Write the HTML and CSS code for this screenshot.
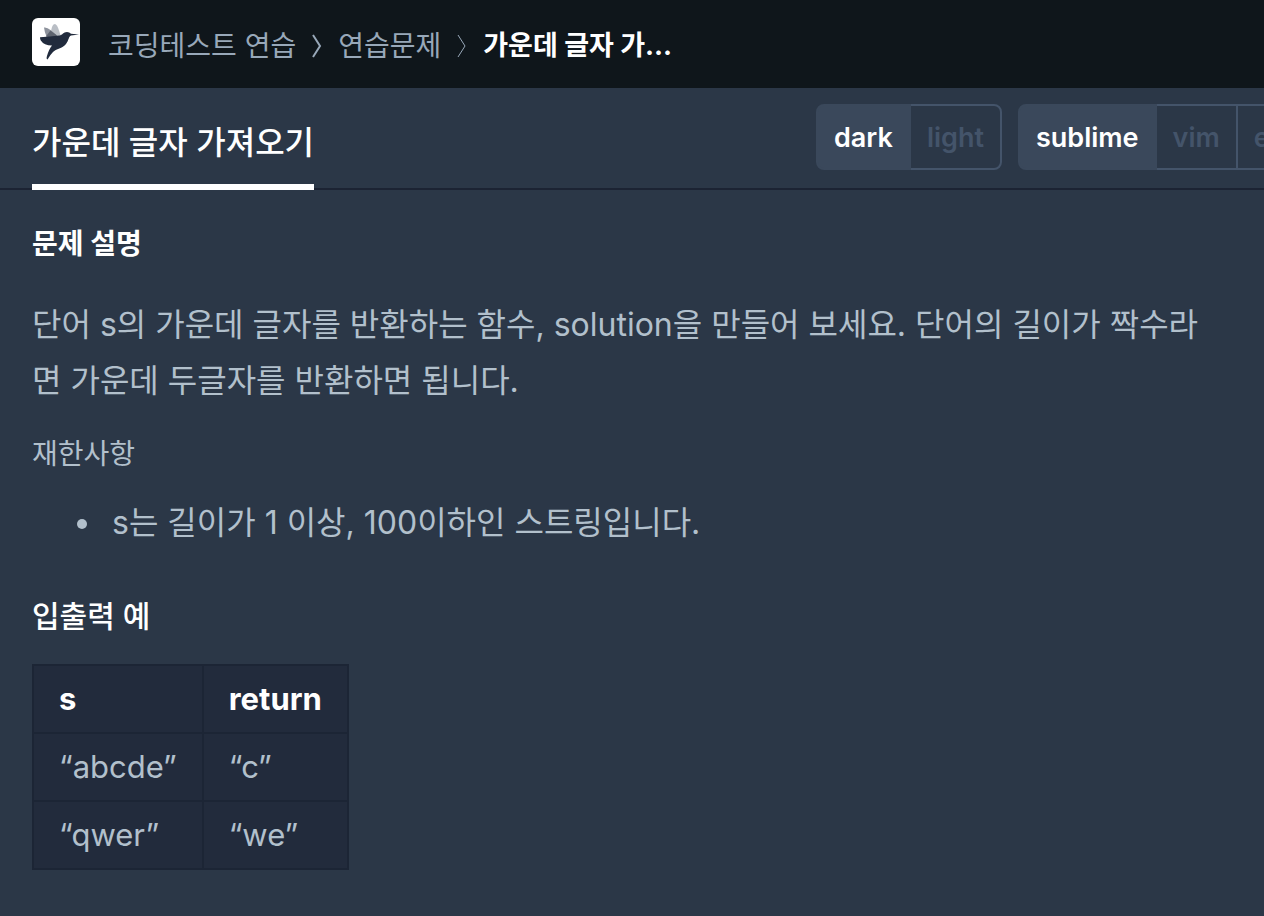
FILE: index.html
```
<!DOCTYPE html>
<html lang="ko">

<head>
    <meta charset="UTF-8" />
    <meta name="viewport" content="width=device-width, initial-scale=1.0" />
    <title>코딩테스트 연습 - 가운데 글자 가져오기</title>
    <link rel="stylesheet" href="styles.css">
</head>

<body>
    <header class="navbar">
        <a class="logo" href="#" aria-label="홈">
            <svg viewBox="0 0 48 48" aria-hidden="true">
                <path fill="#b9bec5" d="M18.500 15 20 9Q21 6 22.800 6Q25 6.500 26.500 11L28.500 17 25 18.500Z" />
                <path fill="#8d929c" d="M12 9.500Q15 9 18.500 12L25 17.500 20 20 14.500 18.500Q12.500 14 12 9.500Z" />
                <path fill="#5d636f" d="M13.800 18.500 18.500 12.500 25 17.500 21 20Z" />
                <path fill="#212b3d" d="M8 19.300Q18 18.500 27 17.500C31 17 31 14 35 14Q37.500 14 39 15.800L47 16.500 39 17.500C36.500 18.500 37 22 34 26C30.500 30.500 24 31 21 34Q18 37 15.500 41.500Q14 41 15 38Q17 31 20 27.500Q12 27.500 8.800 22.500Q8 21 8 19.300Z" />
            </svg>
        </a>
        <nav class="navbar-path">
            <ol class="breadcrumb">
                <li><a href="#">코딩테스트 연습</a></li>
                <li>
                    <svg class="chevron" viewBox="0 0 10 24" aria-hidden="true"><path d="M1 1 8 12 1 23" /></svg>
                    <a href="#">연습문제</a>
                </li>
                <li class="active">
                    <svg class="chevron thin" viewBox="0 0 10 24" aria-hidden="true"><path d="M1 1 8 12 1 23" /></svg>
                    가운데 글자 가...
                </li>
            </ol>
        </nav>
    </header>

    <div class="challenge-nav">
        <h1 class="challenge-title">가운데 글자 가져오기</h1>
        <div class="editor-options">
            <div class="btn-group">
                <button class="btn active" type="button">dark</button>
                <button class="btn" type="button">light</button>
            </div>
            <div class="btn-group">
                <button class="btn active" type="button">sublime</button>
                <button class="btn" type="button">vim</button>
                <button class="btn" type="button">emacs</button>
            </div>
        </div>
    </div>

    <main class="guide">
        <h2 class="guide-title">문제 설명</h2>
        <p class="guide-text">단어 s의 가운데 글자를 반환하는 함수, solution을 만들어 보세요. 단어의 길이가 짝수라면 가운데 두글자를 반환하면 됩니다.</p>
        <h3 class="guide-subtitle">재한사항</h3>
        <ul class="guide-list">
            <li>s는 길이가 1 이상, 100이하인 스트링입니다.</li>
        </ul>
        <h3 class="example-title">입출력 예</h3>
        <table class="example-table">
            <thead>
                <tr>
                    <th>s</th>
                    <th>return</th>
                </tr>
            </thead>
            <tbody>
                <tr>
                    <td>“abcde”</td>
                    <td>“c”</td>
                </tr>
                <tr>
                    <td>“qwer”</td>
                    <td>“we”</td>
                </tr>
            </tbody>
        </table>
    </main>
</body>

</html>
```
FILE: styles.css
```
* {
    box-sizing: border-box;
}

body,
button {
    font-family: Inter, 'Noto Sans CJK KR', sans-serif;
}

body {
    margin: 0;
    min-height: 100vh;
    background: #2b3747;
    color: #b2c0cc;
}

/* Top bar */
.navbar {
    display: flex;
    align-items: center;
    gap: 28px;
    height: 88px;
    padding: 0 32px 4px;
    background: #0f161b;
}

.logo {
    width: 48px;
    height: 48px;
    border-radius: 6px;
    background: white;
}

.logo svg {
    display: block;
}

.navbar-path {
    padding-top: 8px;
}

.breadcrumb {
    display: flex;
    margin: 0;
    padding: 0;
    list-style: none;
    font-size: 28px;
    line-height: 40px;
    color: #98a8b9;
    white-space: nowrap;
}

.breadcrumb li {
    display: flex;
    align-items: center;
}

.breadcrumb a {
    color: inherit;
    text-decoration: none;
}

.breadcrumb .active {
    color: white;
    font-size: 27px;
    font-weight: 700;
}

.chevron {
    width: 10px;
    height: 24px;
    margin: 0 16px;
    fill: none;
    stroke: #98a8b9;
    stroke-width: 2;
}

.chevron.thin {
    stroke-width: 1;
}

/* Title and editor options */
.challenge-nav {
    display: flex;
    justify-content: space-between;
    height: 102px;
    padding-left: 32px;
    border-bottom: 2px solid #1c2333;
}

.challenge-title {
    flex-shrink: 0;
    height: 102px;
    margin: 0;
    border-bottom: 6px solid white;
    font-size: 32px;
    font-weight: 500;
    line-height: 110px;
    color: white;
}

/* The last group is clipped by the pane edge */
.editor-options {
    display: flex;
    flex: 0 0 448px;
    align-items: flex-start;
    gap: 16px;
    padding-top: 16px;
    overflow: hidden;
}

.btn-group {
    display: flex;
    flex-shrink: 0;
}

.btn {
    height: 66px;
    margin-left: -2px;
    padding: 0 16px;
    border: 2px solid #44546a;
    background: transparent;
    font-size: 27px;
    font-weight: 600;
    color: #44546a;
    cursor: pointer;
}

.btn:first-child {
    margin-left: 0;
    border-radius: 8px 0 0 8px;
}

.btn:last-child {
    border-radius: 0 8px 8px 0;
}

.btn.active {
    position: relative;
    border-color: #3a485b;
    background: #3a485b;
    color: white;
}

/* Problem description */
.guide {
    padding: 33px 64px 32px 32px;
}

.guide-title {
    margin: 0 0 32px;
    font-size: 28px;
    font-weight: 700;
    line-height: 42px;
    color: white;
}

.guide-text {
    margin: 0 0 24px;
    font-size: 32px;
    line-height: 56px;
}

.guide-subtitle {
    margin: 0 0 20px;
    font-size: 28px;
    font-weight: 400;
    line-height: 42px;
}

.guide-list {
    margin: 0 0 44px;
    padding-left: 72px;
    font-size: 32px;
    line-height: 56px;
}

.guide-list li {
    padding-left: 8px;
}

.example-title {
    margin: 0 0 27px;
    font-size: 30px;
    font-weight: 500;
    line-height: 42px;
    color: white;
}

.example-table {
    border-collapse: collapse;
    background: #222b3c;
    font-size: 31px;
    line-height: 48px;
}

.example-table th,
.example-table td {
    padding: 9px 25px;
    border: 2px solid #1c2535;
    text-align: left;
}

.example-table th {
    color: white;
    font-weight: 700;
}
```
